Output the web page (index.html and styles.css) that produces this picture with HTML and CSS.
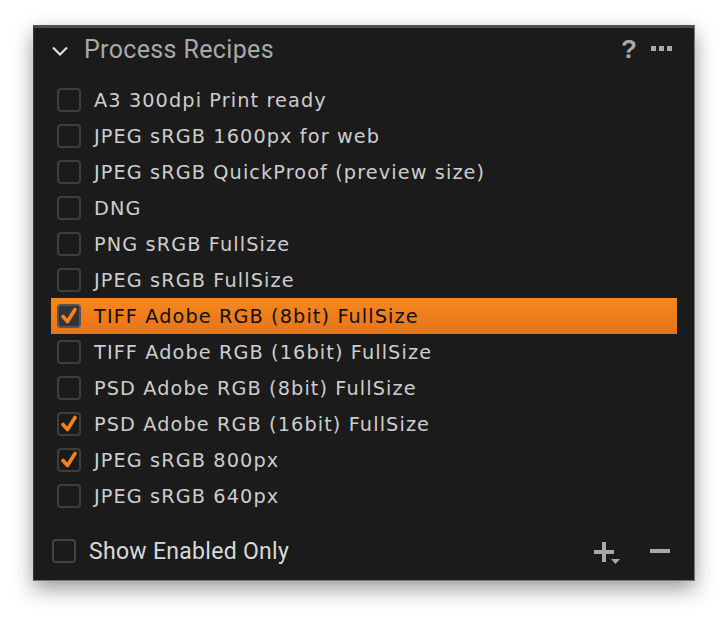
FILE: index.html
```html
<!DOCTYPE html>
<html>
<head>
<meta charset="utf-8">
<link rel="stylesheet" href="styles.css">
</head>
<body>
<div class="panel">
  <div class="header">
    <svg class="chevron" width="16" height="10" viewBox="0 0 16 10"><path d="M1 1.5 L8 8.5 L15 1.5" fill="none" stroke="#e6e6e6" stroke-width="2"/></svg>
    <span class="title">Process Recipes</span>
    <span class="help">?</span>
    <span class="more"><i></i><i></i><i></i></span>
  </div>
  <ul class="list">
    <li class="row"><span class="box"></span><span class="label">A3 300dpi Print ready</span></li>
    <li class="row"><span class="box"></span><span class="label">JPEG sRGB 1600px for web</span></li>
    <li class="row"><span class="box"></span><span class="label">JPEG sRGB QuickProof (preview size)</span></li>
    <li class="row"><span class="box"></span><span class="label">DNG</span></li>
    <li class="row"><span class="box"></span><span class="label">PNG sRGB FullSize</span></li>
    <li class="row"><span class="box"></span><span class="label">JPEG sRGB FullSize</span></li>
    <li class="row selected"><span class="box checked"><svg viewBox="0 0 24 24" width="24" height="24"><path d="M6 12.5 L10.5 17.5 L18 5.5" fill="none" stroke="#f5821f" stroke-width="3.6" stroke-linecap="round" stroke-linejoin="round"/></svg></span><span class="label">TIFF Adobe RGB (8bit) FullSize</span></li>
    <li class="row"><span class="box"></span><span class="label">TIFF Adobe RGB (16bit) FullSize</span></li>
    <li class="row"><span class="box"></span><span class="label">PSD Adobe RGB (8bit) FullSize</span></li>
    <li class="row"><span class="box checked"><svg viewBox="0 0 24 24" width="24" height="24"><path d="M6 12.5 L10.5 17.5 L18 5.5" fill="none" stroke="#f5821f" stroke-width="3.6" stroke-linecap="round" stroke-linejoin="round"/></svg></span><span class="label">PSD Adobe RGB (16bit) FullSize</span></li>
    <li class="row"><span class="box checked"><svg viewBox="0 0 24 24" width="24" height="24"><path d="M6 12.5 L10.5 17.5 L18 5.5" fill="none" stroke="#f5821f" stroke-width="3.6" stroke-linecap="round" stroke-linejoin="round"/></svg></span><span class="label">JPEG sRGB 800px</span></li>
    <li class="row"><span class="box"></span><span class="label">JPEG sRGB 640px</span></li>
  </ul>
  <div class="footer">
    <span class="box"></span>
    <span class="footlabel">Show Enabled Only</span>
    <svg class="plus" width="28" height="24" viewBox="0 0 28 24"><rect x="8" y="2" width="4" height="20" fill="#a8a8a8"/><rect x="0" y="10" width="20" height="4" fill="#a8a8a8"/><path d="M17 19 L26 19 L21.5 24 Z" fill="#a8a8a8"/></svg>
    <svg class="minus" width="20" height="4" viewBox="0 0 20 4"><rect x="0" y="0" width="20" height="4" fill="#a8a8a8"/></svg>
  </div>
</div>
</body>
</html>
```
FILE: styles.css
```css
html, body {
  margin: 0;
  padding: 0;
  background: #ffffff;
}
body {
  padding: 25px 0 40px 33px;
}
.panel {
  box-sizing: border-box;
  width: 662px;
  height: 556px;
  background: #1b1b1b;
  border: 1px solid #777;
  border-top: 3px solid #4e4e4e;
  border-left: 1px solid #3a3a3a;
  box-shadow: 0 8px 20px rgba(0,0,0,0.4);
  display: flex;
  flex-direction: column;
}
.header {
  box-sizing: border-box;
  height: 50px;
  display: flex;
  align-items: center;
  padding: 0 22px 7px 18px;
}
.chevron {
  display: block;
  margin-top: 2px;
}
.title {
  margin-left: 16px;
  font-family: Roboto, "Liberation Sans", sans-serif;
  font-size: 25px;
  color: #a9a9a9;
  letter-spacing: 0.35px;
  flex: 1;
}
.help {
  font-family: "Liberation Sans", sans-serif;
  font-weight: bold;
  font-size: 26px;
  color: #a8a8a8;
  margin-right: 14px;
}
.more {
  display: flex;
  gap: 3px;
  margin-top: -2px;
}
.more i {
  display: block;
  width: 5px;
  height: 5px;
  background: #a8a8a8;
}
.list {
  list-style: none;
  margin: 4px 17px 0 17px;
  padding: 0;
}
.row {
  height: 36px;
  display: flex;
  align-items: center;
  padding-left: 6px;
}
.box {
  box-sizing: border-box;
  width: 24px;
  height: 24px;
  border: 2px solid #3e3e3e;
  border-radius: 4px;
  flex: none;
  position: relative;
}
.box svg {
  position: absolute;
  left: -2px;
  top: -2px;
}
.label {
  margin-left: 13px;
  font-family: "DejaVu Sans", sans-serif;
  font-size: 19.3px;
  color: #cdcdcd;
  letter-spacing: 1.1px;
}
.selected {
  background: linear-gradient(#f7881f, #e5741a);
}
.selected .label {
  color: #111;
}
.selected .box {
  background: #333;
  border-color: #555;
}
.footer {
  margin-top: auto;
  height: 58px;
  display: flex;
  align-items: center;
  padding: 0 24px 0 18px;
}
.footer .box {
  border-color: #444;
}
.footlabel {
  margin-left: 13px;
  font-family: Roboto, "Liberation Sans", sans-serif;
  font-size: 23px;
  color: #d9d9d9;
  letter-spacing: 0.3px;
  flex: 1;
}
.plus {
  display: block;
  margin-right: 28px;
  margin-top: 2px;
}
.minus {
  display: block;
}
```
